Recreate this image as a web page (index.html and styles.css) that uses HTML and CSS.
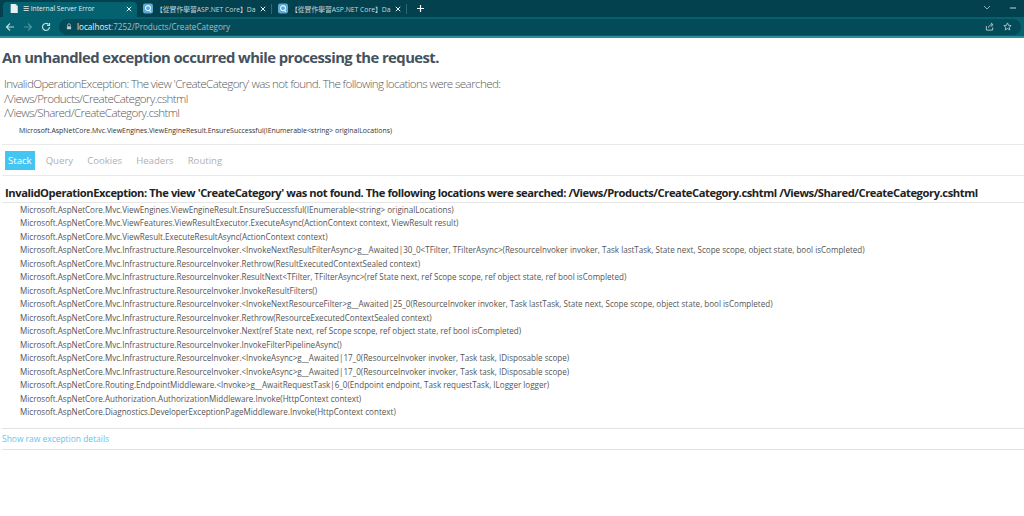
FILE: index.html
```html
<!DOCTYPE html>
<html lang="en">
<head>
<meta charset="utf-8">
<title>Internal Server Error</title>
<link rel="stylesheet" href="styles.css">
</head>
<body>
<header class="chrome">
  <div class="tabstrip">
    <div class="tab tab-active">
      <svg class="favicon" viewBox="0 0 12 12"><path d="M2 0.500h6l2.500 2.500v8.500h-8.500z" fill="#e8f0f4"/><path d="M8 .5v2.500h2.500z" fill="#a9c4d2"/></svg>
      <span class="tab-title">☰ Internal Server Error</span>
      <svg class="tab-close" viewBox="0 0 8 8"><path d="M1 1l6 6M7 1l-6 6"/></svg>
    </div>
    <div class="tab">
      <svg class="favicon" viewBox="0 0 12 12"><rect width="12" height="12" rx="2.500" fill="#5aa9d6"/><circle cx="6" cy="5.500" r="3" fill="none" stroke="#e8f4fb" stroke-width="1.300"/><path d="M7.500 8l2 2" stroke="#e8f4fb" stroke-width="1.300"/></svg>
      <span class="tab-title">【從實作學習ASP.NET Core】Da</span>
      <svg class="tab-close" viewBox="0 0 8 8"><path d="M1 1l6 6M7 1l-6 6"/></svg>
    </div>
    <div class="tab-sep"></div>
    <div class="tab">
      <svg class="favicon" viewBox="0 0 12 12"><rect width="12" height="12" rx="2.500" fill="#5aa9d6"/><circle cx="6" cy="5.500" r="3" fill="none" stroke="#e8f4fb" stroke-width="1.300"/><path d="M7.500 8l2 2" stroke="#e8f4fb" stroke-width="1.300"/></svg>
      <span class="tab-title">【從實作學習ASP.NET Core】Da</span>
      <svg class="tab-close" viewBox="0 0 8 8"><path d="M1 1l6 6M7 1l-6 6"/></svg>
    </div>
    <div class="tab-sep"></div>
    <svg class="new-tab" viewBox="0 0 9 9"><path d="M4.500 1v7M1 4.500h7"/></svg>
    <div class="strip-right">
      <svg class="win-icon" viewBox="0 0 8 6"><path d="M1 1l3 3 3-3"/></svg>
      <svg class="win-icon win-min" viewBox="0 0 8 6"><path d="M1 3h6"/></svg>
    </div>
  </div>
  <div class="toolbar">
    <svg class="nav-icon" viewBox="0 0 10 10"><path d="M9 5H1.500M5 1.500L1.500 5 5 8.500"/></svg>
    <svg class="nav-icon nav-dim" viewBox="0 0 10 10"><path d="M1 5h7.500M5 1.500L8.500 5 5 8.500"/></svg>
    <svg class="nav-icon" viewBox="0 0 10 10"><path d="M8.500 5a3.500 3.500 0 1 1-1-2.500M8.500 1v2.500H6"/></svg>
    <div class="omnibox">
      <svg class="lock" viewBox="0 0 8 10"><path d="M2 4.500V3a2 2 0 0 1 4 0v1.500" fill="none" stroke="#b8cbd2"/><rect x="1" y="4.500" width="6" height="4.500" rx=".8" fill="#b8cbd2"/></svg>
      <span class="url"><span class="url-host">localhost</span>:7252/Products/CreateCategory</span>
      <svg class="omni-icon" viewBox="0 0 10 10"><path d="M1.500 4.500v4.500h7v-3M4 6.500c0-2 1.500-3.500 4-3.500M6.500 1l2.500 2-2.500 2"/></svg>
      <svg class="omni-icon" viewBox="0 0 10 10"><path d="M5 1l1.200 2.700 2.800.3-2.100 1.900.6 2.900L5 7.300 2.500 8.800l.6-2.900L1 4l2.800-.3z"/></svg>
    </div>
  </div>
</header>

<main class="page">
  <h1 class="headline">An unhandled exception occurred while processing the request.</h1>
  <div class="titleerror">InvalidOperationException: The view 'CreateCategory' was not found. The following locations were searched:<br>/Views/Products/CreateCategory.cshtml<br>/Views/Shared/CreateCategory.cshtml</div>
  <p class="location">Microsoft.AspNetCore.Mvc.ViewEngines.ViewEngineResult.EnsureSuccessful(IEnumerable&lt;string&gt; originalLocations)</p>

  <ul class="tabs">
    <li class="tabs-item tabs-selected">Stack</li>
    <li class="tabs-item">Query</li>
    <li class="tabs-item">Cookies</li>
    <li class="tabs-item">Headers</li>
    <li class="tabs-item">Routing</li>
  </ul>

  <h2 class="stack-title">InvalidOperationException: The view 'CreateCategory' was not found. The following locations were searched: /Views/Products/CreateCategory.cshtml /Views/Shared/CreateCategory.cshtml</h2>
  <ul class="frames">
    <li>Microsoft.AspNetCore.Mvc.ViewEngines.ViewEngineResult.EnsureSuccessful(IEnumerable&lt;string&gt; originalLocations)</li>
    <li>Microsoft.AspNetCore.Mvc.ViewFeatures.ViewResultExecutor.ExecuteAsync(ActionContext context, ViewResult result)</li>
    <li>Microsoft.AspNetCore.Mvc.ViewResult.ExecuteResultAsync(ActionContext context)</li>
    <li>Microsoft.AspNetCore.Mvc.Infrastructure.ResourceInvoker.&lt;InvokeNextResultFilterAsync&gt;g__Awaited|30_0&lt;TFilter, TFilterAsync&gt;(ResourceInvoker invoker, Task lastTask, State next, Scope scope, object state, bool isCompleted)</li>
    <li>Microsoft.AspNetCore.Mvc.Infrastructure.ResourceInvoker.Rethrow(ResultExecutedContextSealed context)</li>
    <li>Microsoft.AspNetCore.Mvc.Infrastructure.ResourceInvoker.ResultNext&lt;TFilter, TFilterAsync&gt;(ref State next, ref Scope scope, ref object state, ref bool isCompleted)</li>
    <li>Microsoft.AspNetCore.Mvc.Infrastructure.ResourceInvoker.InvokeResultFilters()</li>
    <li>Microsoft.AspNetCore.Mvc.Infrastructure.ResourceInvoker.&lt;InvokeNextResourceFilter&gt;g__Awaited|25_0(ResourceInvoker invoker, Task lastTask, State next, Scope scope, object state, bool isCompleted)</li>
    <li>Microsoft.AspNetCore.Mvc.Infrastructure.ResourceInvoker.Rethrow(ResourceExecutedContextSealed context)</li>
    <li>Microsoft.AspNetCore.Mvc.Infrastructure.ResourceInvoker.Next(ref State next, ref Scope scope, ref object state, ref bool isCompleted)</li>
    <li>Microsoft.AspNetCore.Mvc.Infrastructure.ResourceInvoker.InvokeFilterPipelineAsync()</li>
    <li>Microsoft.AspNetCore.Mvc.Infrastructure.ResourceInvoker.&lt;InvokeAsync&gt;g__Awaited|17_0(ResourceInvoker invoker, Task task, IDisposable scope)</li>
    <li>Microsoft.AspNetCore.Mvc.Infrastructure.ResourceInvoker.&lt;InvokeAsync&gt;g__Awaited|17_0(ResourceInvoker invoker, Task task, IDisposable scope)</li>
    <li>Microsoft.AspNetCore.Routing.EndpointMiddleware.&lt;Invoke&gt;g__AwaitRequestTask|6_0(Endpoint endpoint, Task requestTask, ILogger logger)</li>
    <li>Microsoft.AspNetCore.Authorization.AuthorizationMiddleware.Invoke(HttpContext context)</li>
    <li>Microsoft.AspNetCore.Diagnostics.DeveloperExceptionPageMiddleware.Invoke(HttpContext context)</li>
  </ul>
  <div class="raw"><a class="raw-link">Show raw exception details</a></div>
</main>
</body>
</html>
```

FILE: styles.css
```css
* { box-sizing: border-box; }
html, body { margin: 0; padding: 0; }
body { width: 1024px; height: 516px; overflow: hidden; background: #fff; font-family: "Open Sans", "Liberation Sans", sans-serif; }

.chrome { height: 38px; display: flex; flex-direction: column; background: #04616f; border-bottom: 2px solid #2f8f99; }
.tabstrip { height: 17px; background: #03414f; display: flex; align-items: center; padding-left: 3px; }
.tab { width: 134px; height: 15px; margin-top: 2px; display: flex; align-items: center; gap: 3px; padding: 0 5px 2px 6px; color: #c4d6db; font-size: 6.800px; font-family: "Open Sans", "Noto Sans CJK TC", sans-serif; white-space: nowrap; }
.tab-active { background: #04616f; border-radius: 4px 4px 0 0; color: #e4eef0; gap: 4px; font-size: 6.700px; }
.tab-title { flex: 1; min-width: 0; overflow: hidden; }
.favicon { width: 10px; height: 11px; flex: none; }
.tab-close { width: 6px; height: 6px; flex: none; stroke: #eef4f5; stroke-width: 1.300; fill: none; }
.tab-sep { width: 1px; height: 10px; background: #2a6a76; }
.new-tab { width: 9px; height: 9px; margin: 0 0 1px 9px; stroke: #f2f7f8; stroke-width: 1.200; fill: none; }
.strip-right { margin-left: auto; display: flex; align-items: center; gap: 18px; padding: 0 7px 2px 0; }
.win-icon { width: 8px; height: 6px; stroke: #8fb0b8; stroke-width: 1; fill: none; }
.win-min { stroke: #c4d6db; }

.toolbar { flex: 1; display: flex; align-items: center; padding: 0 3px 0 5px; gap: 8px; }
.nav-icon { width: 10px; height: 10px; flex: none; stroke: #b9dbe2; stroke-width: 1.200; fill: none; }
.nav-dim { stroke: #4f929e; }
.omnibox { flex: 1; height: 16px; background: #044b5a; border-radius: 8px; display: flex; align-items: center; padding: 0 9px 0 7px; gap: 5px; font-size: 8.150px; color: #a6bec5; }
.lock { width: 6px; height: 7px; flex: none; }
.url { flex: 1; }
.url-host { color: #eaf2f4; }
.omni-icon { width: 9px; height: 9px; margin-left: 4px; stroke: #b9ccd2; stroke-width: 1; fill: none; }

.page { color: #222; }
.headline { margin: 0; padding: 11px 0 0 2px; font-size: 14.800px; line-height: 17px; font-weight: 700; letter-spacing: -0.550px; color: #44525e; }
.titleerror { margin: 11px 0 0 4px; font-size: 11.600px; line-height: 14.500px; font-weight: 300; letter-spacing: -0.600px; color: #5a5a5a; }
.location { margin: 5px 0 0 19px; font-size: 6.950px; line-height: 10px; color: #333; }
.tabs { list-style: none; margin: 8px 0 0 2px; padding: 6px 0 0 3px; border-top: 1px solid #eaeaea; border-bottom: 1px solid #eaeaea; display: flex; height: 32px; }
.tabs-item { font-size: 9.600px; line-height: 19px; height: 19px; padding: 0 3px; margin-right: 8px; color: #b0b0b0; }
.tabs-selected { background: #44c5f2; color: #fff; }
.stack-title { margin: 0 0 0 5px; padding: 9px 0 1px; font-size: 11.200px; line-height: 16px; font-weight: 700; letter-spacing: -0.430px; color: #222; white-space: nowrap; }
.frames { list-style: none; margin: 0 0 0 2px; padding: 0 0 0 18px; border-top: 1px solid #e6e6e6; font-size: 8.070px; line-height: 13.500px; color: #555; white-space: nowrap; height: 226px; }
.raw { margin-left: 2px; height: 22px; border-top: 1px solid #e2e2e2; border-bottom: 1px solid #e2e2e2; font-size: 8.450px; line-height: 20px; }
.raw-link { color: #64c4ee; }
```
